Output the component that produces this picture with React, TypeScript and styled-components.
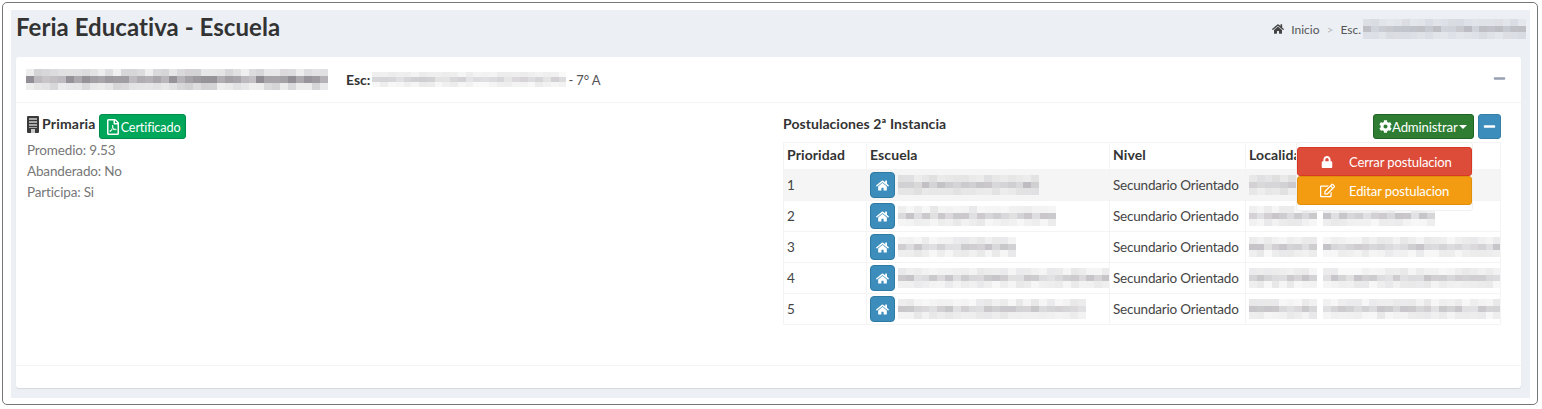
import React from 'react';
import styled, { createGlobalStyle } from 'styled-components';
import { FaCog, FaHome, FaLock, FaMinus, FaRegEdit, FaRegFilePdf } from 'react-icons/fa';

const GlobalStyle = createGlobalStyle`
  html, body {
    margin: 0;
    padding: 0;
    background: #ffffff;
  }
  body {
    font-family: 'Lato', 'Liberation Sans', sans-serif;
    font-size: 13.5px;
    letter-spacing: -0.15px;
    color: #333333;
  }
  * {
    box-sizing: border-box;
  }
  svg {
    flex-shrink: 0;
  }
`;

// seeded noise so the censored blocks look the same on every load
function shades(count: number, seed: number) {
  const out: number[] = [];
  let s = seed;
  for (let i = 0; i < count; i++) {
    s = (s * 9301 + 49297) % 233280;
    out.push(s / 233280);
  }
  return out;
}

interface SmudgeProps {
  width: number;
  seed: number;
  strength?: number;
  height?: number;
}

function Smudge({ width, seed, strength = 0.36, height = 20 }: SmudgeProps) {
  const cols = Math.ceil(width / 8);
  const values = shades(cols * 3, seed);
  return (
    <SmudgeGrid style={{ width, height, gridTemplateColumns: `repeat(${cols}, 1fr)` }}>
      {values.map((v, i) => {
        const row = Math.floor(i / cols);
        const level = row === 1 ? 0.5 + v * 0.5 : 0.12 + v * 0.28;
        return (
          <span
            key={i}
            style={{ backgroundColor: `rgba(95, 90, 100, ${(level * strength).toFixed(3)})` }}
          />
        );
      })}
    </SmudgeGrid>
  );
}

function BuildingIcon() {
  return (
    <BuildingSvg width="12" height="17" viewBox="0 0 12 17">
      <rect width="12" height="17" rx="1" fill="#3a3a3a" />
      <rect x="2" y="2" width="8" height="2" fill="#a9a9a9" />
      <rect x="2" y="5" width="8" height="2" fill="#a9a9a9" />
      <rect x="2" y="8" width="8" height="2" fill="#a9a9a9" />
      <rect x="2" y="11" width="8" height="1" fill="#a9a9a9" />
      <rect x="4" y="13" width="4" height="4" fill="#c9c9c9" />
    </BuildingSvg>
  );
}

const rows = [
  { id: 1, school: 141, place: 62, placeTwo: 0 },
  { id: 2, school: 158, place: 68, placeTwo: 112 },
  { id: 3, school: 118, place: 68, placeTwo: 178 },
  { id: 4, school: 212, place: 68, placeTwo: 178 },
  { id: 5, school: 188, place: 68, placeTwo: 178 }
];

export default function App() {
  return (
    <>
      <GlobalStyle />
      <Frame>
        <Content>
          <PageHeader>
            <Title>Feria Educativa - Escuela</Title>
            <Breadcrumb>
              <FaHome size={12} color="#444" />
              <CrumbLink>Inicio</CrumbLink>
              <CrumbSeparator>&gt;</CrumbSeparator>
              <CrumbCurrent>
                <CrumbLink>Esc.</CrumbLink>
                <Smudge width={163} seed={11} strength={0.36} />
              </CrumbCurrent>
            </Breadcrumb>
          </PageHeader>
          <Card>
            <CardHeader>
              <HeaderTitle>
                <Smudge width={302} seed={23} strength={0.7} height={21} />
                <SchoolLabel>Esc:</SchoolLabel>
                <Smudge width={194} seed={37} strength={0.3} height={15} />
                <Grade>- 7° A</Grade>
              </HeaderTitle>
              <CollapseGhost>
                <FaMinus size={13} />
              </CollapseGhost>
            </CardHeader>
            <CardBody>
              <LeftColumn>
                <LevelRow>
                  <BuildingIcon />
                  <LevelName>Primaria</LevelName>
                  <CertificateButton>
                    <FaRegFilePdf size={16} />
                    Certificado
                  </CertificateButton>
                </LevelRow>
                <Detail>Promedio: 9.53</Detail>
                <Detail>Abanderado: No</Detail>
                <Detail>Participa: Si</Detail>
              </LeftColumn>
              <RightColumn>
                <RightHeader>
                  <SectionTitle>Postulaciones 2ª Instancia</SectionTitle>
                  <Actions>
                    <AdminButton>
                      <FaCog size={13} />
                      Administrar
                      <Caret />
                    </AdminButton>
                    <MinusButton>
                      <FaMinus size={13} />
                    </MinusButton>
                    <Menu>
                      <MenuItem $bg="#dd4b39" $border="#d73925">
                        <MenuIcon>
                          <FaLock size={12} />
                        </MenuIcon>
                        Cerrar postulacion
                      </MenuItem>
                      <MenuItem $bg="#f39c12" $border="#e08e0b">
                        <MenuIcon>
                          <FaRegEdit size={15} />
                        </MenuIcon>
                        Editar postulacion
                      </MenuItem>
                    </Menu>
                  </Actions>
                </RightHeader>
                <Table>
                  <colgroup>
                    <col width={83} />
                    <col width={243} />
                    <col width={136} />
                    <col width={255} />
                  </colgroup>
                  <thead>
                    <tr>
                      <Th>Prioridad</Th>
                      <Th>Escuela</Th>
                      <Th>Nivel</Th>
                      <Th>Localidad</Th>
                    </tr>
                  </thead>
                  <tbody>
                    {rows.map((row) => (
                      <Row key={row.id}>
                        <Td>{row.id}</Td>
                        <Td>
                          <SchoolCell>
                            <HomeButton>
                              <FaHome size={13} />
                            </HomeButton>
                            <Smudge width={row.school} seed={row.id * 17} />
                          </SchoolCell>
                        </Td>
                        <Td>Secundario Orientado</Td>
                        <Td>
                          <PlaceCell>
                            <Smudge width={row.place} seed={row.id * 29} />
                            {row.placeTwo > 0 && <Smudge width={row.placeTwo} seed={row.id * 41} />}
                          </PlaceCell>
                        </Td>
                      </Row>
                    ))}
                  </tbody>
                </Table>
              </RightColumn>
            </CardBody>
            <CardFooter />
          </Card>
        </Content>
      </Frame>
    </>
  );
}

const Frame = styled.div`
  margin: 2px 4px 0 2px;
  height: 403px;
  padding: 7px 7px 6px 8px;
  border: 1px solid #777777;
  border-radius: 5px;
  background: #ffffff;
`;

const Content = styled.div`
  display: flex;
  flex-direction: column;
  height: 100%;
  padding: 0 9px 10px 5px;
  background: #ecf0f5;
`;

const PageHeader = styled.div`
  display: flex;
  justify-content: space-between;
  align-items: center;
  height: 47px;
  margin-right: -9px;
  padding: 0 4px 14px 0;
`;

const Title = styled.h1`
  margin: 0;
  font-size: 24px;
  font-weight: 700;
  line-height: 30px;
  letter-spacing: 0.05px;
  color: #333333;
`;

const Breadcrumb = styled.div`
  display: flex;
  align-items: center;
  gap: 7px;
  padding-top: 5px;
  font-size: 12px;
  letter-spacing: 0;
  color: #444444;
`;

const CrumbCurrent = styled.div`
  display: flex;
  align-items: center;
  gap: 2px;
`;

const CrumbLink = styled.span`
  color: #555555;
`;

const CrumbSeparator = styled.span`
  color: #bbbbbb;
`;

const SmudgeGrid = styled.div`
  display: grid;
  grid-auto-rows: 1fr;
  flex-shrink: 0;
  filter: blur(0.5px);
`;

const Card = styled.div`
  display: flex;
  flex-direction: column;
  flex: 1;
  border-radius: 3px;
  background: #ffffff;
  box-shadow: 0 1px 1px rgba(0, 0, 0, 0.1);
`;

const CardHeader = styled.div`
  display: flex;
  justify-content: space-between;
  align-items: center;
  height: 46px;
  padding: 0 15px 0 10px;
  border-bottom: 1px solid #f4f4f4;
`;

const HeaderTitle = styled.div`
  display: flex;
  align-items: center;
`;

const SchoolLabel = styled.strong`
  margin-left: 18px;
  margin-right: 2px;
  font-size: 14px;
  letter-spacing: 0;
`;

const Grade = styled.span`
  margin-left: 2px;
  font-size: 13px;
  color: #555555;
`;

const CollapseGhost = styled.span`
  display: flex;
  margin-bottom: 2px;
  color: #97a0b3;
`;

const CardBody = styled.div`
  display: grid;
  grid-template-columns: 1fr 1fr;
  flex: 1;
  padding: 11px 10px 0;
`;

const CardFooter = styled.div`
  height: 23px;
  border-top: 1px solid #f4f4f4;
`;

const LeftColumn = styled.div`
  display: flex;
  flex-direction: column;
`;

const LevelRow = styled.div`
  display: flex;
  align-items: flex-start;
  height: 26px;
  padding-left: 1px;
`;

const BuildingSvg = styled.svg`
  margin-top: 2px;
`;

const LevelName = styled.strong`
  margin-left: 3px;
  margin-right: 3px;
  font-size: 14px;
  line-height: 20px;
  letter-spacing: 0.2px;
`;

const CertificateButton = styled.button`
  display: flex;
  align-items: center;
  height: 25px;
  padding: 0 5px;
  border: 1px solid #008d4c;
  border-radius: 3px;
  background: #00a65a;
  color: #ffffff;
  font: inherit;
  font-size: 12.7px;
  letter-spacing: -0.15px;
`;

const Detail = styled.div`
  height: 21px;
  line-height: 21px;
  padding-left: 1px;
  color: #777777;
`;

const RightColumn = styled.div`
  padding-left: 16px;
  padding-right: 10px;
`;

const RightHeader = styled.div`
  display: flex;
  justify-content: space-between;
  align-items: center;
  height: 25px;
  margin-bottom: 3px;
`;

const SectionTitle = styled.h4`
  margin: 0 0 6px;
  font-size: 14px;
  font-weight: 700;
  letter-spacing: 0.05px;
  color: #333333;
`;

const Actions = styled.div`
  position: relative;
  display: flex;
  gap: 4px;
`;

const AdminButton = styled.button`
  display: flex;
  align-items: center;
  width: 101px;
  height: 25px;
  padding: 0 5px;
  border: 1px solid #1f6425;
  border-radius: 3px;
  background: #2e7d32;
  color: #ffffff;
  font: inherit;
  font-size: 13.2px;
  letter-spacing: -0.15px;
`;

const Caret = styled.span`
  margin-left: 1px;
  border-top: 4px solid #ffffff;
  border-left: 4px solid transparent;
  border-right: 4px solid transparent;
`;

const MinusButton = styled.button`
  display: flex;
  align-items: center;
  justify-content: center;
  width: 23px;
  height: 25px;
  padding: 0;
  border: 1px solid #367fa9;
  border-radius: 3px;
  background: #3c8dbc;
  color: #ffffff;
`;

const Menu = styled.div`
  position: absolute;
  top: 28px;
  right: 28px;
  z-index: 2;
  width: 177px;
  padding: 4px 0 5px;
  border: 1px solid #f0f0f0;
  border-radius: 3px;
  background: #ffffff;
`;

const MenuItem = styled.div<{ $bg: string; $border: string }>`
  display: flex;
  align-items: center;
  height: 29px;
  padding-left: 19px;
  border: 1px solid ${(p) => p.$border};
  border-radius: 3px;
  background: ${(p) => p.$bg};
  color: #ffffff;
  font-size: 13.1px;
  white-space: nowrap;
`;

const MenuIcon = styled.span`
  display: flex;
  justify-content: center;
  width: 20px;
  margin-right: 12px;
`;

const Table = styled.table`
  width: 717px;
  table-layout: fixed;
  border-collapse: collapse;
  border: 1px solid #f4f4f4;
`;

const Th = styled.th`
  height: 27px;
  padding: 0 3px 3px;
  border: 1px solid #f4f4f4;
  text-align: left;
  font-size: 14px;
  font-weight: 700;
  letter-spacing: 0.1px;
  color: #333333;
  white-space: nowrap;
  overflow: hidden;
`;

const Row = styled.tr`
  &:first-child {
    background: #f5f5f5;
  }
`;

const Td = styled.td`
  height: 31px;
  padding: 0 2px 0 3px;
  border: 1px solid #f4f4f4;
  color: #444444;
  letter-spacing: -0.2px;
  white-space: nowrap;
  overflow: hidden;
`;

const SchoolCell = styled.div`
  display: flex;
  align-items: center;
  gap: 3px;
`;

const PlaceCell = styled.div`
  display: flex;
  align-items: center;
  gap: 6px;
`;

const HomeButton = styled.span`
  display: flex;
  flex-shrink: 0;
  align-items: center;
  justify-content: center;
  width: 25px;
  height: 26px;
  border: 1px solid #2e7aa3;
  border-radius: 4px;
  background: #3c8dbc;
  color: #ffffff;
`;
